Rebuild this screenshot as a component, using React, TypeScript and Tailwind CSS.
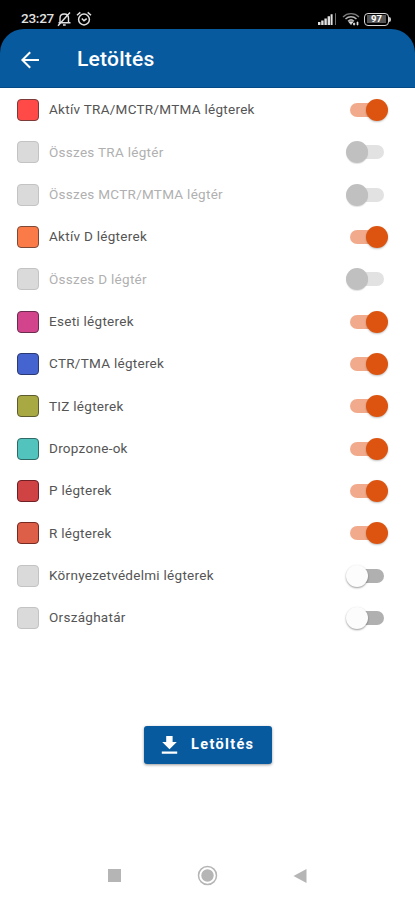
type Layer = {
  label: string;
  swatch: string;
  state: "on" | "off" | "disabled";
};

const EMPTY = "bg-[#dadada] border-[#c3c3c3]";

const layers: Layer[] = [
  { label: "Aktív TRA/MCTR/MTMA légterek", swatch: "bg-[#ff4a48] border-[#7c3a38]", state: "on" },
  { label: "Összes TRA légtér", swatch: EMPTY, state: "disabled" },
  { label: "Összes MCTR/MTMA légtér", swatch: EMPTY, state: "disabled" },
  { label: "Aktív D légterek", swatch: "bg-[#fb7b48] border-[#7d4a38]", state: "on" },
  { label: "Összes D légtér", swatch: EMPTY, state: "disabled" },
  { label: "Eseti légterek", swatch: "bg-[#d2458c] border-[#6c2c50]", state: "on" },
  { label: "CTR/TMA légterek", swatch: "bg-[#4664cf] border-[#2c3a72]", state: "on" },
  { label: "TIZ légterek", swatch: "bg-[#a9a943] border-[#5c5c30]", state: "on" },
  { label: "Dropzone-ok", swatch: "bg-[#52c3bd] border-[#2f6a67]", state: "on" },
  { label: "P légterek", swatch: "bg-[#d04345] border-[#6f2024]", state: "on" },
  { label: "R légterek", swatch: "bg-[#de5f48] border-[#762a22]", state: "on" },
  { label: "Környezetvédelmi légterek", swatch: EMPTY, state: "off" },
  { label: "Országhatár", swatch: EMPTY, state: "off" },
];

const track = {
  on: "bg-[#f1ab8c]",
  off: "bg-[#b0b0b0]",
  disabled: "bg-[#e2e2e2]",
};

const thumb = {
  on: "left-[20px] bg-[#dc5410] shadow-[0_1px_2px_rgba(0,0,0,0.25)]",
  off: "left-0 bg-[#fcfcfc] shadow-[0_1px_2px_rgba(0,0,0,0.4)]",
  disabled: "left-0 bg-[#c0c0c0] shadow-[0_1px_1px_rgba(0,0,0,0.12)]",
};

const Toggle = ({ state }: { state: Layer["state"] }) => (
  <button role="switch" aria-checked={state === "on"} className="relative flex h-[22px] w-[42px] items-center">
    <span className={`ml-[4px] h-[14px] w-[34px] rounded-full ${track[state]}`} />
    <span className={`absolute top-0 size-[22px] rounded-full ${thumb[state]}`} />
  </button>
);

const StatusBar = () => (
  <div className="flex h-[29px] items-center bg-black pl-[21px] pt-[9px] text-[#e2e2e2]">
    <span className="w-[35px] whitespace-nowrap text-[13.5px] font-medium leading-none tracking-[-0.25px]">23:27</span>
    {/* muted bell */}
    <svg className="ml-[1px] h-[16px] w-[15px]" viewBox="0 0 15 16" fill="none" stroke="currentColor" strokeWidth="1.4">
      <path d="M3 11.5V7.2C3 4.6 4.7 3 7.2 3 9.8 3 11.5 4.7 11.5 7.2v4.3M1.5 11.8h12M6 14h2.7M1 14.8 13 1.5" />
    </svg>
    {/* alarm clock */}
    <svg className="ml-[4px] h-[16px] w-[16px]" viewBox="0 0 16 16" fill="none" stroke="currentColor" strokeWidth="1.5">
      <circle cx="8" cy="8.5" r="5.4" />
      <path d="M1 4.3 4.3 1.4M15 4.3l-3.3-2.9M5.8 7.5 8 9.7l2.7-2" />
    </svg>
    {/* signal */}
    <svg className="ml-[226px] h-[14px] w-[19px]" viewBox="0 0 19 14" fill="currentColor">
      <path d="M0 10h2.4v3H0zM3.2 8.5h2.4V13H3.2zM6.4 6.5h2.4V13H6.4zM9.6 4.3H12V13H9.6zM12.6 2.3h2V13h-2z" />
      <path d="M17 1.2h1V13h-1z" opacity=".5" />
    </svg>
    {/* wifi */}
    <svg className="ml-[5px] h-[14px] w-[18px]" viewBox="0 0 18 14" fill="none" stroke="currentColor">
      <path d="M1 5C5.5.6 12.5.6 17 5" strokeWidth="1.3" opacity=".55" />
      <path d="M3.5 7c3.2-3 7.8-3 11 0M6 9.2c1.8-1.6 4.2-1.6 6 0" strokeWidth="1.5" opacity=".8" />
      <path d="M6.8 9.8h4.2L9 12.6zM11.5 11h1.2v2h-1.2zM15 10h1v3h-1z" fill="currentColor" strokeWidth=".7" />
    </svg>
    <div className="ml-[4px] flex h-[13px] w-[25px] items-center justify-center rounded-[4px] border-[1.5px] border-[#d8d8d8]">
      <span className="flex h-[8px] w-[19px] items-center justify-center bg-[#555] text-[9.5px] font-bold leading-none text-white">97</span>
    </div>
    <span className="h-[5px] w-[2px] rounded-r-sm bg-[#c8c8c8]" />
  </div>
);

const App = () => {
  return (
    <div className="flex h-[900px] w-[415px] flex-col overflow-hidden bg-white font-['Roboto',sans-serif]">
      <StatusBar />

      <div className="bg-black">
        <header className="flex h-[59px] items-center rounded-t-[24px] border-b border-[#044a86] bg-[#085a9f] pl-[20px] pt-[3px] text-white">
          <svg className="size-[20px]" viewBox="0 0 20 20" fill="none" stroke="currentColor" strokeWidth="2">
            <path d="M19 10H3M10.2 2.2 2.4 10l7.8 7.8" />
          </svg>
          <h1 className="ml-[37px] text-[21px] font-medium leading-none tracking-[0.25px]">Letöltés</h1>
        </header>
      </div>

      <ul className="flex h-[551.3px] flex-col pt-[1px]">
        {layers.map(({ label, swatch, state }) => (
          <li key={label} className="flex flex-1 items-center pl-[17px] pr-[27px]">
            <span className={`size-[22px] rounded-[4px] border ${swatch}`} />
            <span
              className={`ml-[10px] flex-1 whitespace-nowrap text-[13.5px] leading-none tracking-[0.28px] ${
                state === "disabled" ? "text-[#b0b0b0]" : "text-[#555]"
              }`}
            >
              {label}
            </span>
            <Toggle state={state} />
          </li>
        ))}
      </ul>

      <button className="mt-[86.7px] ml-[144px] flex h-[38px] w-[128px] items-center rounded-[3px] bg-[#085a9f] pl-[17px] text-white shadow-[0_1px_3px_rgba(0,0,0,0.4)]">
        <svg className="h-[20px] w-[17px]" viewBox="0 0 17 20" fill="currentColor">
          <path d="M5.2 1h6.4v6h4.2l-7.3 7.3L1.2 7h4zM.8 16.6h15.4v2.2H.8z" />
        </svg>
        <span className="ml-[13px] text-[14.5px] font-bold leading-none tracking-[1.35px]">Letöltés</span>
      </button>

      <nav className="mt-auto flex h-[49px] items-center pl-[108px] text-[#b5b5b5]">
        <span className="size-[13px] bg-current" />
        <svg className="ml-[76px] size-[21px]" viewBox="0 0 21 21">
          <circle cx="10.5" cy="10.5" r="9" fill="none" stroke="currentColor" strokeWidth="1.5" />
          <circle cx="10.5" cy="10.5" r="6.2" fill="currentColor" />
        </svg>
        <svg className="ml-[75px] h-[14px] w-[14px]" viewBox="0 0 14 14" fill="currentColor">
          <path d="M13.5 0v14L.5 7z" />
        </svg>
      </nav>
    </div>
  );
};

export default App;
